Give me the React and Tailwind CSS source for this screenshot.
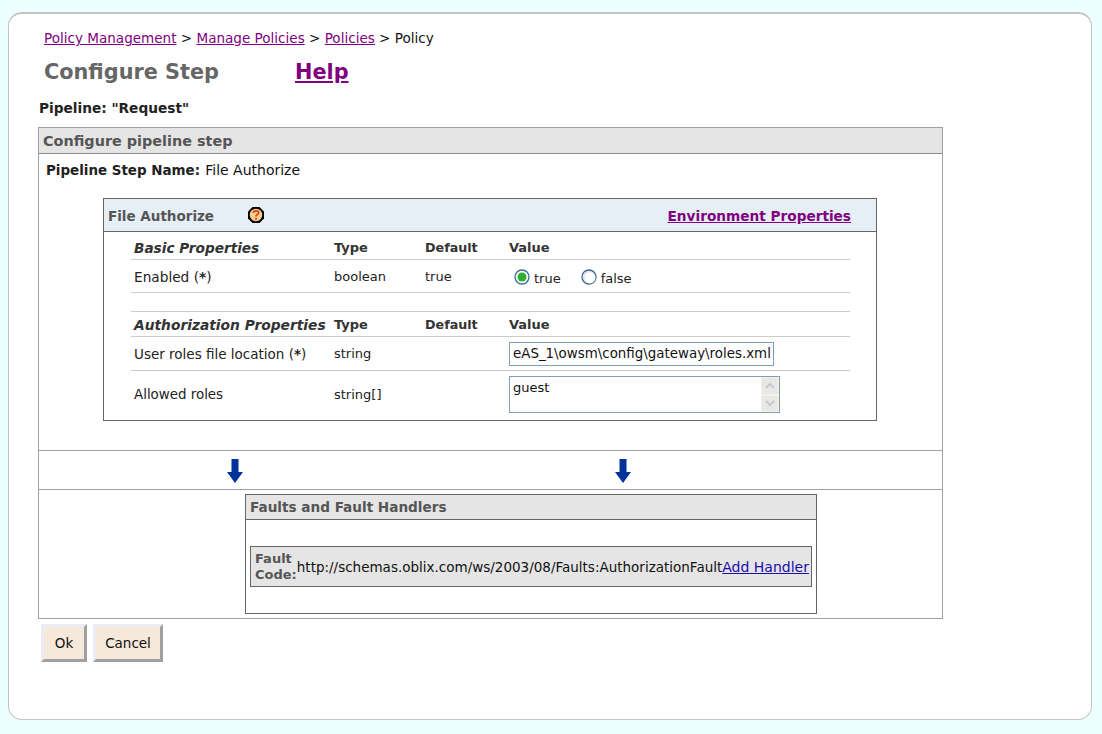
const purple = "text-[#800080] underline";

function HelpIcon() {
  return (
    <svg width="18" height="18" viewBox="0 0 18 18" className="block">
      <path d="M5.5 1H12.5L17 5.5V12.5L12.5 17H5.5L1 12.5V5.5Z" fill="#000" />
      <circle cx="9" cy="9" r="6.2" fill="#fbd08f" />
      <path d="M6.5 7 Q6.5 4.8 9 4.8 Q11.6 4.8 11.6 6.8 Q11.6 8 10 8.8 Q9 9.3 9 10.6" fill="none" stroke="#e2421a" strokeWidth="1.8" />
      <rect x="8" y="11.8" width="2" height="2" fill="#e2421a" />
    </svg>
  );
}

function Arrow() {
  return (
    <svg width="16" height="24" viewBox="0 0 16 24" className="block">
      <path d="M4.5 0H11.5V13H16L8 24L0 13H4.5Z" fill="#003399" />
    </svg>
  );
}

function Radio({ checked }) {
  return (
    <svg width="16" height="16" viewBox="0 0 16 16" className="block">
      <circle cx="8" cy="8" r="7" fill={checked ? "#fff" : "#e8e8f2"} stroke="#3c6a94" strokeWidth="1.3" />
      {!checked && <circle cx="9" cy="9" r="5.4" fill="#fff" />}
      {checked && <circle cx="8" cy="8" r="4.5" fill="#2fb02f" />}
    </svg>
  );
}

function ScrollBtn({ up }) {
  return (
    <div className="w-[18px] h-[17.5px] bg-[#e8e8e6] border border-[#f4f1dc] rounded-[2px] flex items-center justify-center">
      <svg width="10" height="7" viewBox="0 0 10 7">
        <path d={up ? "M1 6L5 2L9 6" : "M1 1L5 5L9 1"} fill="none" stroke="#c8c8c8" strokeWidth="2" />
      </svg>
    </div>
  );
}

const cols = "grid grid-cols-[200px_91px_84px_1fr] pl-[3px]";

function HeadRow({ title, h, pad, size }) {
  return (
    <div className={`${cols} items-center font-bold text-[#333] ${h} ${pad} border-b border-[#ccccc4]`}>
      <div className={`italic whitespace-nowrap ${size}`}>{title}</div>
      <div>Type</div>
      <div className="text-[12.7px]">Default</div>
      <div>Value</div>
    </div>
  );
}

function Button({ children, w }) {
  return (
    <button className={`${w} h-[38px] pb-[1px] bg-[#f6e8da] text-[#111] border-[3px] border-t-[#ececf4] border-l-[#ececf4] border-r-[#a0a0a0] border-b-[#a0a0a0] text-[13.5px]`}>
      {children}
    </button>
  );
}

export default function App() {
  return (
    <div className="bg-[#eeffff] h-[734px] overflow-hidden pt-[12px] px-[8px] text-[13px] leading-[16px] text-[#111]" style={{ fontFamily: '"DejaVu Sans", Verdana, sans-serif' }}>
      <div className="w-[1084px] h-[708px] bg-white border border-[#c0c4c4] border-t-2 rounded-[14px] pl-[29px]">
        <div className="pt-[16px] pl-[6px] h-[33px] whitespace-nowrap text-[13.55px]">
          <a className={purple}>Policy Management</a>{" > "}
          <a className={purple}>Manage Policies</a>{" > "}
          <a className={purple}>Policies</a>{" > "}Policy
        </div>
        <div className="flex items-center h-[33px] pl-[6px] mt-[8px] text-[20.8px] font-bold">
          <div className="w-[251px] text-[#666]">Configure Step</div>
          <a className={purple}>Help</a>
        </div>
        <div className="mt-[12px] pl-px h-[16px] font-bold text-[#222] text-[13.7px]">Pipeline: "Request"</div>
        <div className="mt-[11px] w-[905px] h-[492px] border border-[#a0a0a0]">
          <div className="h-[26px] pt-[1px] bg-[#e5e5e5] border-b border-[#8c8c8c] pl-[4px] flex items-center font-bold text-[14.4px] text-[#555]">Configure pipeline step</div>
          <div className="h-[297px] border-b border-[#a0a0a0] pl-[7px] pt-[8px]">
            <div className="h-[16px]"><b className="text-[#222] text-[13.45px]">Pipeline Step Name:</b> <span className="text-[14px] ml-[1px]">File Authorize</span></div>
            <div className="mt-[20px] ml-[57px] w-[774px] h-[223px] border border-[#666]">
              <div className="h-[33px] bg-[#e6eef6] border-b border-[#666] flex items-center pl-[4px] pr-[25px]">
                <div className="font-bold text-[#555] w-[139px] text-[13.5px] pt-[2px]">File Authorize</div>
                <HelpIcon />
                <a className={`ml-auto font-bold text-[13.67px] pt-[2px] ${purple}`}>Environment Properties</a>
              </div>
              <div className="ml-[27px] w-[719px] text-[13px] text-[#222]">
                <HeadRow title="Basic Properties" h="h-[28px]" pad="pt-[5px]" size="text-[13.65px]" />
                <div className={`${cols} items-center h-[33px] pt-[1px] border-b border-[#ccccc4]`}>
                  <div className="text-[13.7px]">Enabled (<b>*</b>)</div>
                  <div>boolean</div>
                  <div>true</div>
                  <div className="flex items-center pl-[5px]">
                    <Radio checked />
                    <span className="ml-[4px] mt-[5px]">true</span>
                    <span className="ml-[20px]"><Radio /></span>
                    <span className="ml-[4px] mt-[5px]">false</span>
                  </div>
                </div>
                <div className="h-[19px] border-b border-[#ccccc4]" />
                <HeadRow title="Authorization Properties" h="h-[25px]" pad="pt-[2px]" size="text-[13.8px]" />
                <div className={`${cols} items-center h-[34px] border-b border-[#ccccc4]`}>
                  <div className="text-[13.5px]">User roles file location (<b>*</b>)</div>
                  <div>string</div>
                  <div></div>
                  <div className="w-[265px] h-[24px] pt-[1px] border border-[#7f9db9] pl-[3px] flex items-center overflow-hidden whitespace-nowrap text-[#111] text-[13.4px]">eAS_1\owsm\config\gateway\roles.xml</div>
                </div>
                <div className={`${cols} items-start pt-[5px]`}>
                  <div className="mt-[11px] text-[13.4px]">Allowed roles</div>
                  <div className="mt-[11px]">string[]</div>
                  <div></div>
                  <div className="w-[271px] h-[37px] border border-[#7f9db9] flex justify-between text-[#111]">
                    <span className="pl-[3px] pt-[3px]">guest</span>
                    <div className="flex flex-col w-[18px]"><ScrollBtn up /><ScrollBtn /></div>
                  </div>
                </div>
              </div>
            </div>
          </div>
          <div className="h-[39px] border-b border-[#a0a0a0] pt-[8px] flex pl-[188px]">
            <Arrow />
            <div className="ml-[372px]"><Arrow /></div>
          </div>
          <div className="pt-[4px] pl-[206px]">
            <div className="w-[572px] h-[120px] border border-[#666]">
              <div className="h-[25px] bg-[#e5e5e5] border-b border-[#666] pl-[4px] flex items-center font-bold text-[13.6px] text-[#555]">Faults and Fault Handlers</div>
              <div className="pt-[26px] pl-[4px]">
                <div className="w-[562px] h-[41px] bg-[#e5e5e5] border border-[#666] flex items-center pl-[4px] whitespace-nowrap">
                  <b className="text-[#555] leading-[16px] pt-[1px]">Fault<br />Code:</b>
                  <span className="text-[13.5px]">http://schemas.oblix.com/ws/2003/08/Faults:AuthorizationFault</span>
                  <a className="text-[#1a0dab] underline text-[14px]">Add Handler</a>
                </div>
              </div>
            </div>
          </div>
        </div>
        <div className="flex gap-[6px] mt-[5px] ml-[3px]">
          <Button w="w-[46px]">Ok</Button>
          <Button w="w-[70px]">Cancel</Button>
        </div>
      </div>
    </div>
  );
}
